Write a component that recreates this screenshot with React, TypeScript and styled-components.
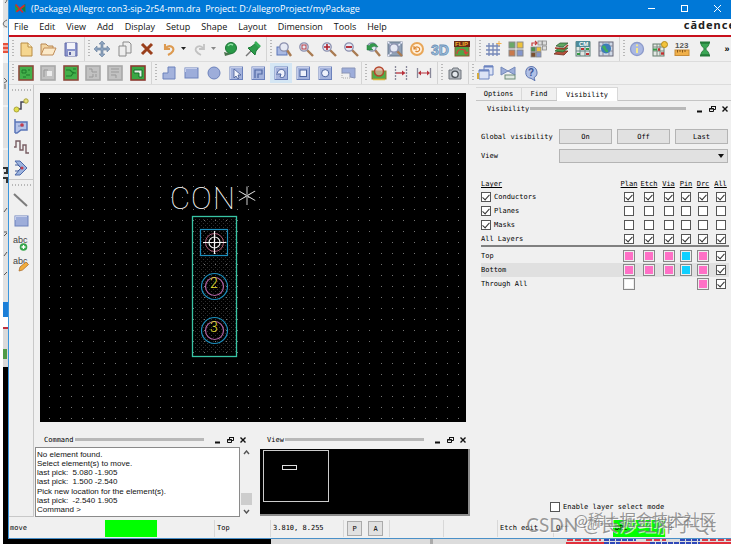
import React, { ReactNode } from 'react';
import styled, { createGlobalStyle } from 'styled-components';

const UI = '"Open Sans", "Noto Sans", sans-serif';
const MONO = '"DejaVu Sans Mono", "Liberation Mono", monospace';
const SANS = '"Liberation Sans", Arial, sans-serif';
const CJK = 'Lato, "Noto Sans CJK SC", sans-serif';

const Global = createGlobalStyle`
  * { box-sizing: border-box; }
  body { margin: 0; background: #fff; overflow: hidden; }
  button, select, input { font: inherit; color: inherit; margin: 0; padding: 0; border-radius: 0; }
`;

/* ---------- frame ---------- */
const Desktop = styled.div`
  position: relative;
  height: 100vh;
  display: grid;
  grid-template-columns: 8px minmax(0, 1fr);
  grid-template-rows: minmax(0, 1fr) 5px;
  overflow: hidden;
`;
const SideStrip = styled.svg`
  grid-row: 1 / 3;
  width: 8px;
  height: 100%;
`;
const BottomStrip = styled.svg`
  width: 100%;
  height: 5px;
`;
const Window = styled.div`
  display: flex;
  flex-direction: column;
  min-height: 0;
  background: #f0f0f0;
  border-left: 1px solid #3a96dd;
  border-bottom: 1px solid #4a90c8;
`;
const TitleBar = styled.header`
  height: 19px;
  flex: none;
  display: flex;
  align-items: center;
  gap: 4px;
  padding: 0 4px 2px 5px;
  background: #0078d7;
  color: #fff;
  font: 9px/14px ${UI};
  white-space: pre;
`;
const TitleText = styled.span`
  flex: 1;
`;
const TitleButton = styled.button`
  width: 33px;
  height: 14px;
  border: 0;
  background: none;
  display: grid;
  place-items: center;
`;
const TitleControls = styled.div`
  display: flex;
  margin-right: -7px;
`;
const MenuBar = styled.nav`
  height: 18px;
  flex: none;
  display: flex;
  align-items: center;
  gap: 11px;
  padding: 0 0 0 5px;
  background: #fff;
  border-bottom: 2px solid #c8101c;
  overflow: hidden;
`;
const MenuLink = styled.a`
  color: #111;
  text-decoration: none;
  font: 9px/14px ${UI};
`;
const Brand = styled.span`
  height: 16px;
  margin-left: auto;
  margin-right: -5px;
  color: #222;
  font: bold 11px/12px "Noto Sans", sans-serif;
  letter-spacing: 1px;
`;

/* ---------- toolbars ---------- */
const Toolbar = styled.div<{ $h: number }>`
  height: ${p => p.$h}px;
  flex: none;
  display: flex;
  border-bottom: 1px solid #dcdcdc;
  overflow: hidden;
`;
const Group = styled.div`
  flex: none;
  display: flex;
  align-items: center;
  padding-right: 2px;
  border-right: 1px solid #d4d4d4;
  &:last-of-type { border-right: 0; }
`;
const Handle = styled.div`
  width: 2px;
  height: 18px;
  margin: 0 1px 0 3px;
  background: repeating-linear-gradient(#b8b8b8 0 1px, transparent 1px 3px);
`;
const Items = styled.div<{ $w: number }>`
  width: ${p => p.$w}px;
  display: flex;
`;
const ToolButton = styled.button<{ $small?: boolean; $on?: boolean }>`
  flex: ${p => (p.$small ? '0 0 8px' : '1 1 0')};
  min-width: 0;
  height: 20px;
  border: 0;
  display: grid;
  place-items: center;
  background: ${p => (p.$on ? '#d4e6f4' : 'none')};
`;
const More = styled.button`
  margin: 0 0 0 auto;
  width: 8px;
  border: 0;
  background: none;
  font: bold 9px/12px ${SANS};
`;
const Glyph = styled.svg<{ $size: number }>`
  width: ${p => p.$size}px;
  height: ${p => p.$size}px;
  display: block;
  overflow: visible;
`;

/* ---------- body ---------- */
const Main = styled.div`
  flex: 1;
  min-height: 0;
  display: grid;
  grid-template-columns: 25px minmax(0, 1fr) 260px;
  padding-bottom: 2px;
`;
const ToolColumn = styled.aside`
  border-right: 1px solid #c8c8c8;
  border-bottom: 1px solid #c8c8c8;
`;
const ColumnGroup = styled.div`
  height: 95px;
  display: flex;
  flex-direction: column;
  align-items: center;
  padding-top: 4px;
  border-bottom: 1px solid #c8c8c8;
  &:last-child { border-bottom: 0; }
`;
const ColumnHandle = styled.div`
  width: 19px;
  height: 2px;
  margin-bottom: 3px;
  background: repeating-linear-gradient(90deg, #b8b8b8 0 1px, transparent 1px 3px);
`;
const ColumnButton = styled.button`
  flex: 1;
  width: 22px;
  border: 0;
  background: none;
  display: grid;
  place-items: center;
`;
const Center = styled.main`
  display: flex;
  flex-direction: column;
  min-height: 0;
  min-width: 0;
`;
const Board = styled.div`
  flex: 1;
  min-height: 0;
  margin: 8px 5px 0 6px;
  background: #000;
`;
const BoardDrawing = styled.svg`
  width: 100%;
  height: 100%;
  display: block;
`;
const Docks = styled.div`
  height: 95px;
  flex: none;
  display: flex;
  gap: 8px;
  padding: 10px 1px 0 1px;
`;
const Dock = styled.section<{ $grow: number }>`
  flex: ${p => p.$grow} 1 0;
  min-width: 0;
  display: flex;
  flex-direction: column;
`;
const DockHeader = styled.div<{ $pad: number; $end: number }>`
  height: 15px;
  flex: none;
  display: flex;
  align-items: center;
  padding: 0 ${p => p.$end}px 0 ${p => p.$pad}px;
  font: 7px/10px ${MONO};
  color: #000;
`;
const Rule = styled.div`
  flex: 1;
  height: 3px;
  margin: 0 6px 0 1px;
  background: #b8b8b8;
`;
const DockButton = styled.button`
  width: 13px;
  height: 12px;
  border: 0;
  background: none;
  display: grid;
  place-items: center;
`;
const CommandBody = styled.div`
  flex: 1;
  min-height: 0;
  display: flex;
`;
const Log = styled.div`
  flex: 1;
  display: flex;
  flex-direction: column;
  justify-content: space-between;
  padding: 2px 1px;
  background: #fff;
  border: 1px solid #8a8a8a;
  color: #111;
  font: 8px/9px ${SANS};
  white-space: pre;
`;
const Scroll = styled.div`
  width: 12px;
  display: flex;
  flex-direction: column;
  align-items: center;
  padding: 3px 0;
`;
const Thumb = styled.div`
  width: 11px;
  height: 12px;
  margin: auto 0 4px;
  background: #cdcdcd;
`;
const Overview = styled.div`
  flex: 1;
  min-height: 0;
  margin: 2px 0 1px 0;
  background: #000;
  border: solid #8c8c8c;
  border-width: 0 2px 2px 0;
`;

/* ---------- right panel ---------- */
const Side = styled.aside`
  display: flex;
  flex-direction: column;
  min-width: 0;
  padding: 2px 0 0 5px;
  font: 7px/10px ${MONO};
  color: #000;
`;
const Tabs = styled.div`
  display: flex;
  height: 14px;
  border-bottom: 1px solid #c4c4c4;
`;
const Tab = styled.button<{ $w: number; $on?: boolean }>`
  width: ${p => p.$w}px;
  height: ${p => (p.$on ? 14 : 13)}px;
  border: solid #d8d8d8;
  border-width: 1px 1px 0 0;
  background: ${p => (p.$on ? '#fff' : '#f0f0f0')};
`;
const Form = styled.div`
  display: grid;
  grid-template-columns: 73px repeat(3, 53px);
  column-gap: 5px;
  row-gap: 5px;
  align-items: center;
  padding: 13px 0 0 5px;
  white-space: nowrap;
`;
const PushButton = styled.button`
  height: 15px;
  background: #e1e1e1;
  border: 1px solid #b4b4b4;
`;
const ViewSelect = styled.select`
  height: 14px;
  appearance: none;
  border: 1px solid #b4b4b4;
  background: #e1e1e1;
`;
const SelectWrap = styled.div`
  grid-column: 2 / 5;
  display: grid;
  align-items: center;
  & > * { grid-area: 1 / 1; }
  & > svg { justify-self: end; margin-right: 4px; pointer-events: none; }
`;
const Layers = styled.table`
  width: 248px;
  margin: 15px 0 0 5px;
  border-collapse: collapse;
  table-layout: fixed;
  th, td { padding: 0; text-align: center; font-weight: normal; height: 14px; }
  th:first-child, td:first-child { text-align: left; }
  thead th { text-decoration: underline; height: 12px; }
`;
const LayerRow = styled.tr<{ $shade?: boolean; $line?: boolean }>`
  background: ${p => (p.$shade ? '#e0e0e0' : 'none')};
  ${p => p.$line && 'border-bottom: 2px solid #808080;'}
`;
const SpacerRow = styled.tr`
  && td { height: 3px; }
`;
const Check = styled.input`
  appearance: none;
  width: 10px;
  height: 10px;
  flex: none;
  border: 1px solid #555;
  background: #fff;
  display: inline-grid;
  place-items: center;
  vertical-align: middle;
  &:checked::after {
    content: '';
    width: 3px;
    height: 6px;
    margin-bottom: 2px;
    border: solid #333;
    border-width: 0 1px 1px 0;
    transform: rotate(42deg);
  }
`;
const CheckLabel = styled.label`
  display: flex;
  align-items: center;
  gap: 3px;
`;
const Swatch = styled.button<{ $c: string }>`
  width: 12px;
  height: 12px;
  display: block;
  margin: 0 auto;
  border: 1px solid #888;
  background: ${p => p.$c};
  box-shadow: inset 0 0 0 1px #eee;
`;
const SelectMode = styled.div`
  margin: auto 0 5px 74px;
`;

/* ---------- status bar ---------- */
const Status = styled.footer`
  height: 19px;
  flex: none;
  display: flex;
  align-items: center;
  font: 7px/17px ${MONO};
  color: #000;
  overflow: hidden;
`;
const Cell = styled.div<{ $w?: number; $line?: boolean }>`
  flex: ${p => (p.$w ? `0 0 ${p.$w}px` : '1 1 0')};
  height: 17px;
  padding-left: ${p => (p.$line ? 2 : 1)}px;
  border-left: ${p => (p.$line ? '1px solid #d8d8d8' : '0')};
  white-space: pre;
`;
const Lamp = styled.div`
  flex: 0 0 52px;
  height: 17px;
  padding-left: 2px;
  background: #0f0;
`;
const ModeButton = styled.button`
  width: 15px;
  height: 15px;
  margin-right: 6px;
  line-height: 12px;
  border: 1px solid #aaa;
  background: #e1e1e1;
`;
const Watermark = styled.div<{ $x: number; $y: number; $size: number }>`
  position: absolute;
  right: ${p => p.$x}px;
  bottom: ${p => p.$y}px;
  color: rgba(120, 120, 120, 0.75);
  font: ${p => p.$size}px/20px ${CJK};
  text-shadow: 1px 1px 0 rgba(255, 255, 255, 0.7);
  white-space: nowrap;
  pointer-events: none;
`;

/* ---------- icon artwork ---------- */
const B = '#5b76b8';
const L = '#a9b9e2';
const lens = (x: number, y: number, sign: ReactNode) => (
  <g>
    <path d={`M${x + 3} ${y + 3}L15 15`} stroke="#a97b52" strokeWidth="2.4" />
    <circle cx={x} cy={y} r="4.2" fill="#e6e9f4" stroke="#8a8fae" strokeWidth="1.3" />
    {sign}
  </g>
);
const board = (frame: string, fill: string, art: ReactNode) => (
  <g>
    <rect x="1" y="1" width="14" height="14" fill={fill} stroke={frame} strokeWidth="1.6" />
    {art}
  </g>
);
const tile = (art: ReactNode) => (
  <g>
    <rect x="2" y="2" width="12.5" height="12.5" fill="#a3b2dc" stroke="#6c82bc" />
    <path d="M2.5 14V2.5H14" stroke="#c4cdea" fill="none" />
    {art}
  </g>
);
const word = (s: string, x: number, y: number, size: number, fill: string) => (
  <text x={x} y={y} fontSize={size} fontWeight="bold" fontFamily="Liberation Sans" fill={fill}>{s}</text>
);
const icons: Record<string, ReactNode> = {
  logo: <g><path d="M1 3l6 5-5 5z" fill="#1aa04a" /><path d="M14 2L8 7l6 6z" fill="#14813c" /><path d="M2 3l9 10M3 12L13 4" stroke="#d82a2a" strokeWidth="2" /></g>,
  file: <g><path d="M3 2h7l4 4v9H3z" fill="#f5d68f" stroke="#b88c45" /><path d="M10 2v4h4" fill="#fff3cf" stroke="#b88c45" /></g>,
  open: <g><path d="M1 14V3h5l2 2h5v3" fill="#f3d6a4" stroke="#b88650" /><path d="M1 14l3-7h12l-3 7z" fill="#fbe9c8" stroke="#c08c58" /></g>,
  save: <g><path d="M2 2h12v13H2z" fill="#8a94cc" stroke="#646ca8" /><rect x="4" y="2" width="8" height="6" fill="#f2f3fa" /><rect x="5" y="10" width="7" height="5" fill="#dfe2ee" /><rect x="6" y="11" width="2" height="3" fill="#5a62a0" /></g>,
  move: <path d="M8 0l3 3H9v4h4V5l3 3-3 3V9H9v4h2l-3 3-3-3h2V9H3v2L0 8l3-3v2h4V3H5z" fill="#8ba1bd" stroke="#647d9c" strokeWidth=".6" />,
  copy: <g fill="#eee" stroke="#8a8a8a"><path d="M6 1h6l2 2v9H6z" /><path d="M2 5h7v10H2z" /></g>,
  del: <path d="M3 3l10 10M13 3L3 13" stroke="#9a3f1c" strokeWidth="3" />,
  undo: <path d="M4 3v5h5M4.500 7.500C8 3 14 6 12 10c-1 2-3 3-5 4" fill="none" stroke="#dd9a50" strokeWidth="2.1" />,
  redo: <path d="M12 3v5H7M11.500 7.500C8 3 2 6 4 10c1 2 3 3 5 4" fill="none" stroke="#c2c2c2" strokeWidth="1.800" />,
  drop: <path d="M0 6h5l-2.500 3z" fill="#222" />,
  drop2: <path d="M0 6h5l-2.500 3z" fill="#888" />,
  ball: <g><path d="M2 11l8 2-7 2z" fill="#4c7350" /><circle cx="9" cy="7" r="5.500" fill="#2a9a48" stroke="#1c7436" /><path d="M6 5c1-2 3-2 5-1" stroke="#8fe0a4" fill="none" strokeWidth="1.500" /></g>,
  pin: <g><path d="M1 15l6-6" stroke="#777" strokeWidth="1.500" /><path d="M3 7l3-1 5-4 4 3-4 5-1 4z" fill="#2c9a4a" stroke="#1c7a36" /><path d="M10 1l5 5" stroke="#37b058" strokeWidth="2.500" /></g>,
  zwin: <g><rect x="1" y="6" width="10" height="8" fill={L} stroke={B} />{lens(8, 6, null)}</g>,
  zfit: lens(6, 6, <rect x="4" y="4" width="4" height="4" fill="none" stroke="#b43c44" />),
  zin: lens(6, 6, <path d="M3 6h6M6 3v6" stroke="#b0202c" strokeWidth="1.600" />),
  zout: lens(6, 6, <path d="M3 6h6" stroke="#b0202c" strokeWidth="1.800" />),
  zprev: <g>{lens(7, 6, null)}<path d="M2 9V4l2 1c2-4 7-3 9 1-3-1-5-1-7 1l2 2z" fill="#339a4c" stroke="#207838" strokeWidth=".5" /></g>,
  zall: <g><rect x="1" y="1" width="14" height="14" fill="#8fa0b5" stroke="#66768c" /><path d="M1 1l4 4M15 1l-4 4M1 15l4-4" stroke="#eef" strokeWidth="1.5" strokeDasharray="2 1" />{lens(7, 7, null)}</g>,
  refresh: <g><circle cx="8" cy="8" r="6" fill="#fff0dc" stroke="#e8a658" strokeWidth="2" /><path d="M5 5v3h3M5.500 7.500c2-3 6-1 5 1.500-1 2-3 2-4 1" fill="none" stroke="#d98530" strokeWidth="1.200" /></g>,
  three: <g stroke="#6b92b8" strokeWidth=".8">{word('3D', -1, 14, 14, '#a4c2de')}</g>,
  flip: <g><rect x="1" y="5" width="14" height="10" fill="#4fa545" stroke="#8b5a30" /><rect x="0" y="0" width="16" height="6" fill="#6a2a18" />{word('FLIP', 1, 5, 6, '#f4b22c')}<path d="M3 13c0-6 9-6 9-1M10 11l2 2 2-2" stroke="#d8403c" fill="none" strokeWidth="1.400" /></g>,
  grid: <g><path d="M1 5h14M1 9h14M1 13h14M4 2v13M8 2v13M12 2v13" stroke="#7688b8" strokeWidth="1.300" /><path d="M14 0v5M11.500 2.500h5" stroke="#f2b04c" /></g>,
  colors: <g stroke="#8a8a8a"><rect x="1" y="1" width="6" height="6" fill="#6ba868" /><rect x="9" y="1" width="6" height="6" fill="#edc23c" /><rect x="1" y="9" width="6" height="6" fill="#c8794c" /><rect x="9" y="9" width="6" height="6" fill="#8496cc" /></g>,
  colors2: <g stroke="#888" strokeWidth=".8"><rect x="8" y="0" width="4" height="4" fill="#ddd" /><rect x="12.500" y="0" width="4" height="4" fill="#ddd" /><rect x="12.500" y="5" width="4" height="4" fill="#ddd" /><rect x="1" y="6" width="4.500" height="4.500" fill="#4b8d50" /><rect x="6.500" y="6" width="4.500" height="4.500" fill="#edc23c" /><rect x="1" y="11.500" width="4.500" height="4.500" fill="#7a5030" /><rect x="6.500" y="11.500" width="4.500" height="4.500" fill="#8496cc" /><path d="M2 5V2h4M5 0l2 2-2 2" stroke="#c43a3a" fill="none" strokeWidth="1.200" /></g>,
  stack: <g strokeWidth=".8"><path d="M1 13l4-3h10l-4 4z" fill="#b4503c" stroke="#743020" /><path d="M2 10l4-3h9l-5 4z" fill="#4d9a50" stroke="#2d6a34" /><path d="M3 5l4-3h8l-5 4z" fill="#5fa862" stroke="#345c36" /><path d="M2 7l9 1 4-4" stroke="#a03828" fill="none" strokeWidth="1.500" /></g>,
  cm: <g><rect x="1" y="1" width="14" height="14" fill="#dfe5e2" stroke="#5d7c76" /><rect x="1" y="0" width="14" height="6" fill="#4e8b98" />{word('CM', 4, 5, 6, '#fff')}<path d="M5 6v9M10 6v9M1 10h14" stroke="#688" /><path d="M6 8h3M11 13h3" stroke="#c03030" strokeWidth="2" /><path d="M11 8h3M2 13h3" stroke="#339a44" strokeWidth="2" /></g>,
  globe: <g><rect x="1" y="1" width="14" height="14" fill="#cfd8e6" stroke="#667" /><path d="M1 5h14M1 10h14M5 1v14M11 1v14" stroke="#889" /><circle cx="8" cy="7.500" r="5" fill="#3c7cb8" /><path d="M4 6c2-3 4-1 4 1s3 1 2 4c-3 1-3-2-6-5z" fill="#3fae5a" /></g>,
  info: <g><circle cx="8" cy="8" r="6.500" fill="#aab8e2" stroke="#8b99c9" strokeWidth="1.300" /><path d="M8 3.500v1.800M8 7v5" stroke="#f4e88a" strokeWidth="2" /></g>,
  sheet: <g><rect x="1" y="3" width="11" height="12" fill="#e4e8e4" stroke="#667c6e" /><path d="M1 6h11M1 10h11M5 3v12M8 3v12" stroke="#7a8c80" /><path d="M6 8.500h2M9 12.500h3" stroke="#c03030" strokeWidth="2.500" /><path d="M1 8.500h4" stroke="#339a44" strokeWidth="2" /><circle cx="12.500" cy="3.500" r="3" fill="#f2c33c" stroke="#b58a1c" /></g>,
  ruler: <g>{word('123', 1, 7, 8, '#555')}<rect x="1" y="9" width="14" height="5.500" fill="#f0b04a" stroke="#c88c38" /><path d="M3.500 9v2.500M6 9v2M8.500 9v2.500M11 9v2" stroke="#8a5818" /></g>,
  hourglass: <g><path d="M4 2h8c0 4-3 4-3 6s3 2 3 6H4c0-4 3-4 3-6S4 6 4 2z" fill="#3aa654" stroke="#227a38" /><path d="M3 1.500h10M3 14.500h10" stroke="#227a38" strokeWidth="2" /></g>,
  b1: board('#8c4a3c', '#44b04a', <path d="M4 5h4v3H4zM8 10h4M10 5h2M5 12h3" stroke="#1d7a2a" fill="none" />),
  b2: board('#a8a8a8', '#c2c2c2', <g><rect x="7" y="6" width="5" height="5" fill="#ececec" /><path d="M4 12V5h4" stroke="#999" fill="none" /></g>),
  b3: board('#8c4a3c', '#44b04a', <path d="M3 5h4l3 3h3M3 11h5l3-4M10 4h3" stroke="#1d7a2a" fill="none" strokeWidth="1.200" />),
  b4: board('#a8a8a8', '#c2c2c2', <path d="M4 4h3v3h5M4 12h4V9M11 12V9" stroke="#999" fill="none" />),
  b5: board('#a8a8a8', '#c2c2c2', <path d="M4 4h8M4 7h8M4 10h5v3" stroke="#999" fill="none" />),
  b6: board('#8c3a30', '#3aa644', <path d="M4 5h8v7H9V8H4z" fill="#e8f0e6" stroke="#14702a" />),
  shape: <path d="M7 2h7v12H2V8h5z" fill="#a3b2dc" stroke="#6c82bc" />,
  rect: <g><rect x="2" y="3" width="13" height="10" fill="#9dadda" stroke="#6c82bc" /><path d="M2.500 7V3.500H14" stroke="#c4cdea" fill="none" /></g>,
  circle: <circle cx="8" cy="8" r="6" fill="#9dadda" stroke="#6c82bc" />,
  pick: tile(<path d="M6 4v9l2-2 2 3 1-1-1-3h3z" fill="#f4f6fc" stroke="#445a94" strokeWidth=".8" />),
  void1: tile(<path d="M5 13V5h7v4H8v4" fill="none" stroke="#5068a4" strokeWidth="1.200" />),
  void2: tile(<path d="M4 10c0-7 8-7 8-2s-3 5-5 4l1-3H5" fill="#eef1fb" stroke="#4c649f" />),
  void3: tile(<rect x="5" y="5" width="6.500" height="6.500" fill="#eef1fb" stroke="#4c649f" />),
  void4: tile(<circle cx="8.200" cy="8.200" r="3.600" fill="#eef1fb" stroke="#4c649f" />),
  island: <g><path d="M2 3h13v10l-5-1V8H2z" fill="#9dadda" stroke="#8a95b8" /><path d="M2 8v5h8" stroke="#aaa" strokeDasharray="1 1" fill="none" /></g>,
  drc: <g><rect x="1" y="6" width="14" height="8" fill="#4fae48" stroke="#9a7a30" /><circle cx="8" cy="6.500" r="4.500" fill="#dfb09c" fillOpacity=".7" stroke="#b4452c" strokeWidth="1.500" /><path d="M2 14.500h12" stroke="#d4b63c" strokeWidth="1.500" /></g>,
  dim1: <g stroke="#889"><path d="M2.500 1v14M13.500 1v14" strokeDasharray="2 1" strokeWidth="1.300" /><path d="M3 8h7" stroke="#b8323c" strokeWidth="1.300" /><path d="M9 5.500l3.500 2.500-3.500 2.500z" fill="#b8323c" stroke="none" /></g>,
  dim2: <g><path d="M1.500 3v10M14.500 3v10" stroke="#889" strokeWidth="1.300" /><path d="M3 8h10" stroke="#b8323c" /><path d="M5 5.500L2 8l3 2.500zM11 5.500L14 8l-3 2.500z" fill="#b8323c" /></g>,
  camera: <g><path d="M2 5h3l1-2h5l1 2h2v9H2z" fill="#b5bac0" stroke="#70767e" /><circle cx="8" cy="9.300" r="3.200" fill="#e4e8ec" stroke="#4c5258" strokeWidth="1.300" /></g>,
  windows: <g fill="#dce3f5" stroke="#6c84c0"><path d="M6 1h9v9H6z" /><path d="M1 5h10v9H1z" /><path d="M1 5.500h10M6 1.500h9" strokeWidth="2" /><path d="M0 8v6" stroke="#d4aa3c" strokeWidth="2" /></g>,
  cross: <g><path d="M1 2l14 8V2L1 10z" fill="#9cadd8" stroke="#7488b8" /><rect x="5" y="10" width="10" height="4" fill="#dfe8e0" stroke="#6c8a78" /></g>,
  help: <g><path d="M8 1.500a6 6 0 0 1 3 11.200l1 3-4-2.300A6 6 0 0 1 8 1.500z" fill="#b0c0e6" stroke="#5f76b0" />{word('?', 5, 11, 10, '#3c5494')}</g>,
  route: <g><path d="M4 12h4V5h4" stroke="#445" fill="none" strokeWidth="1.500" /><circle cx="3.500" cy="12.500" r="2.500" fill="#e2df4c" stroke="#aaa43a" /><circle cx="13" cy="4" r="2.200" fill="#e8e080" stroke="#aaa43a" /></g>,
  slide: <g><path d="M2 1v14M2 4h12v8H8l-4 3H2" fill="#b6c4e8" stroke="#5b76b8" strokeWidth="1.500" /><path d="M5 8h6" stroke="#7488ba" /><circle cx="9" cy="7" r="1.800" fill="#c33c4c" /></g>,
  delay: <path d="M1 8h2V2h4v9h3V6h3v8h3" fill="none" stroke="#785d63" strokeWidth="1.400" />,
  fan: <g><path d="M2 1h5l7 7-7 7H2l6-7z" fill="#9cb3de" stroke="#4c68a8" /><path d="M2 5h3l3 3-3 3H2" fill="none" stroke="#3e5a9c" /><circle cx="9" cy="8" r="1.500" fill="#c33c4c" /></g>,
  line: <path d="M1 2l13 12" stroke="#7c7c7c" strokeWidth="2" />,
  textAdd: <g><text x="0" y="8" fontSize="9" fontFamily="Liberation Sans" fill="#444">abc</text><circle cx="10.500" cy="12" r="3.800" fill="#35a54a" /><path d="M8.500 12h4M10.500 10v4" stroke="#fff" strokeWidth="1.300" /></g>,
  textEdit: <g><text x="0" y="8" fontSize="9" fontFamily="Liberation Sans" fill="#444">abc</text><path d="M6 15l1-4 6-5 2.500 2.500-6 5.500z" fill="#f2ae3c" stroke="#b0702c" strokeWidth=".8" /></g>,
};
const Icon = ({ name, size = 16 }: { name: string; size?: number }) => (
  <Glyph $size={size} viewBox="0 0 16 16" fill="none" aria-hidden="true">{icons[name]}</Glyph>
);

const row1 = [
  { w: 67, items: ['file', 'open', 'save'] },
  { w: 173, items: ['move', 'copy', 'del', 'undo', 'drop', 'redo', 'drop2', 'ball', 'pin'] },
  { w: 200, items: ['zwin', 'zfit', 'zin', 'zout', 'zprev', 'zall', 'refresh', 'three', 'flip'] },
  { w: 135, items: ['grid', 'colors', 'colors2', 'stack', 'cm', 'globe'] },
  { w: 90, items: ['info', 'sheet', 'ruler', 'hourglass'] },
];
const row2 = [
  { w: 134, items: ['b1', 'b2', 'b3', 'b4', 'b5', 'b6'] },
  { w: 201, items: ['shape', 'rect', 'circle', 'pick', 'void1', 'void2', 'void3', 'void4', 'island'] },
  { w: 67, items: ['drc', 'dim1', 'dim2'] },
  { w: 22, items: ['camera'] },
  { w: 67, items: ['windows', 'cross', 'help'] },
];
const ToolGroups = ({ groups }: { groups: { w: number; items: string[] }[] }) => (
  <>
    {groups.map(g => (
      <Group key={g.items[0]}>
        <Handle />
        <Items $w={g.w}>
          {g.items.map(n => (
            <ToolButton key={n} aria-label={n} $small={n.startsWith('drop')} $on={n === 'void2'}>
              <Icon name={n} />
            </ToolButton>
          ))}
        </Items>
      </Group>
    ))}
  </>
);

const WindowButtons = () => (
  <>
    <DockButton aria-label="Minimize"><svg width="8" height="8"><path d="M2 6.500h5" stroke="#111" strokeWidth="2" /></svg></DockButton>
    <DockButton aria-label="Float"><svg width="8" height="8" fill="none" stroke="#111"><path d="M3.500 3V1.500h4v3H6" /><path d="M1.500 3.500h4v3h-4zM3 1.500h5M1 4h5" /></svg></DockButton>
    <DockButton aria-label="Close"><svg width="8" height="8"><path d="M1.500 1.500l5 5M6.500 1.500l-5 5" stroke="#111" strokeWidth="1.400" /></svg></DockButton>
  </>
);

/* ---------- board drawing ---------- */
const PITCH = 11.05;
const dotPath = (cols: number, rows: number, x0: number, y0: number, step: number) => {
  let d = '';
  for (let r = 0; r < rows; r++)
    for (let c = 0; c < cols; c++) d += `M${Math.round(x0 + c * step)} ${Math.round(y0 + r * step)}h1v1h-1z`;
  return d;
};
const BoardView = () => (
  <BoardDrawing role="img" aria-label="Package drawing">
    <path d={dotPath(120, 80, 9, 5, PITCH)} fill="#767676" />
    <path d={dotPath(11, 34, 155, 126, 4)} fill="#343434" />
    <path d={dotPath(10, 33, 157, 128, 4)} fill="#2c2c2c" />
    <rect x="152.500" y="123.500" width="44" height="140" fill="none" stroke="#38c4a4" strokeWidth="1.300" />
    <g fill="none">
      <rect x="160.500" y="136.500" width="27" height="26" stroke="#1c8fbe" strokeWidth="1.200" />
      <circle cx="174.500" cy="149.500" r="9" stroke="#b0607c" />
      <circle cx="174.500" cy="149.500" r="5.500" stroke="#eee" strokeWidth="1.200" />
      <path d="M163 149.500h23M174.500 138v23" stroke="#f4f4f4" strokeWidth="1.200" />
      {[193.5, 237.5].map(y => (
        <g key={y}>
          <circle cx="174.500" cy={y} r="13" stroke="#1c8fbe" strokeWidth="1.200" />
          <circle cx="174.500" cy={y} r="9" stroke="#b264a6" strokeWidth="1.200" />
        </g>
      ))}
    </g>
    <g fontFamily="Roboto, Lato, sans-serif" fontWeight="100" fill="#fff">
      <text y="116" fontSize="31" x="130 151 173">CON</text>
      <text y="143" fontSize="66" x="193" fontFamily="Lato, sans-serif">*</text>
    </g>
    <g fontFamily="Roboto, Lato, sans-serif" fontWeight="300" fontSize="14" fill="#e8e030">
      <text x="170" y="195">2</text>
      <text x="170" y="239">3</text>
    </g>
  </BoardDrawing>
);

/* ---------- visibility panel data ---------- */
const columns = ['Plan', 'Etch', 'Via', 'Pin', 'Drc', 'All'];
const classes = [
  { name: 'Conductors', own: true, on: true },
  { name: 'Planes', own: true, on: false },
  { name: 'Masks', own: true, on: false },
  { name: 'All Layers', own: false, on: true },
];
const P = '#ff70c6';
const C = '#10d0ff';
const layers = [
  { name: 'Top', colors: [P, P, P, C, P] },
  { name: 'Bottom', colors: [P, P, P, C, P] },
  { name: 'Through All', colors: ['#fff', '', '', '', P] },
];
const log = [
  'No element found.',
  'Select element(s) to move.',
  'last pick:  5.080 -1.905',
  'last pick:  1.500 -2.540',
  'Pick new location for the element(s).',
  'last pick:  -2.540 1.905',
  'Command >',
];

export default function App() {
  return (
    <Desktop>
      <Global />
      <SideStrip aria-hidden="true">
        <path d="M3 0h5v302H3z" fill="#e2e2e2" />
        <path d="M3 28h5v35H3z" fill="#f4f4f4" />
        <path d="M7 0a6 6 0 0 1-2 3M7 20c-5 2-5 6 0 7M4 78l3 3-3 2M5 84v5" stroke="#666" fill="none" />
        <path d="M3 43h5v10H3z" fill="#e8523c" />
        <path d="M3 46h5M3 50h5" stroke="#fff" />
        <path d="M3 168h4v5H4M3 178h4v5" stroke="#333" strokeWidth="2" fill="none" />
        <path d="M3 106h5M3 149h5" stroke="#fff" />
        <path d="M4 212l3-4M4 232h3M4 236l3-3M4 256l3-4M4 275l3-3" stroke="#555" fill="none" />
        <path d="M3 302h5v15H3z" fill="#1b7fd8" />
        <path d="M3 317h5v9H3z" fill="#fff" />
        <path d="M3 327h5v2H3z" fill="#c03040" />
        <path d="M3 329h5v38H3z" fill="#dadada" />
        <path d="M3 349h4v10H3z" fill="#4f9a48" />
        <path d="M3 367h5v177H3z" fill="#000" />
      </SideStrip>
      <Window>
        <TitleBar>
          <Icon name="logo" size={13} />
          <TitleText>(Package) Allegro: con3-sip-2r54-mm.dra  Project: D:/allegroProject/myPackage</TitleText>
          <TitleControls>
            <TitleButton aria-label="Minimize"><svg width="9" height="9"><path d="M1 4.500h7" stroke="#fff" /></svg></TitleButton>
            <TitleButton aria-label="Maximize"><svg width="9" height="9"><rect x="1.500" y="1.500" width="6" height="6" fill="none" stroke="#fff" /></svg></TitleButton>
            <TitleButton aria-label="Close"><svg width="9" height="9"><path d="M1 1l7 7M8 1L1 8" stroke="#fff" /></svg></TitleButton>
          </TitleControls>
        </TitleBar>
        <MenuBar>
          {['File', 'Edit', 'View', 'Add', 'Display', 'Setup', 'Shape', 'Layout', 'Dimension', 'Tools', 'Help'].map(m => (
            <MenuLink key={m} href="#">{m}</MenuLink>
          ))}
          <Brand>cādence</Brand>
        </MenuBar>
        <Toolbar $h={25}>
          <ToolGroups groups={row1} />
          <More aria-label="More tools">»</More>
        </Toolbar>
        <Toolbar $h={23}><ToolGroups groups={row2} /></Toolbar>

        <Main>
          <ToolColumn>
            {[['route', 'slide', 'delay', 'fan'], ['line', 'rect', 'textAdd', 'textEdit']].map(g => (
              <ColumnGroup key={g[0]}>
                <ColumnHandle />
                {g.map(n => <ColumnButton key={n} aria-label={n}><Icon name={n} /></ColumnButton>)}
              </ColumnGroup>
            ))}
          </ToolColumn>

          <Center>
            <Board><BoardView /></Board>
            <Docks>
              <Dock $grow={217}>
                <DockHeader $pad={9} $end={3}>Command<Rule /><WindowButtons /></DockHeader>
                <CommandBody>
                  <Log>{log.map(l => <div key={l}>{l}</div>)}</Log>
                  <Scroll>
                    <svg width="7" height="5" fill="none"><path d="M1 4l2.500-3L6 4" stroke="#555" strokeWidth="1.400" /></svg>
                    <Thumb />
                    <svg width="7" height="5" fill="none"><path d="M1 1l2.500 3L6 1" stroke="#555" strokeWidth="1.400" /></svg>
                  </Scroll>
                </CommandBody>
              </Dock>
              <Dock $grow={210}>
                <DockHeader $pad={7} $end={1}>View<Rule /><WindowButtons /></DockHeader>
                <Overview>
                  <BoardDrawing role="img" aria-label="World view">
                    <rect x="3.500" y="1.500" width="65" height="51" fill="none" stroke="#ccc" />
                    <rect x="22.500" y="16.500" width="14" height="4" fill="none" stroke="#ddd" />
                  </BoardDrawing>
                </Overview>
              </Dock>
            </Docks>
          </Center>

          <Side>
            <Tabs role="tablist">
              <Tab role="tab" $w={46}>Options</Tab>
              <Tab role="tab" $w={35}>Find</Tab>
              <Tab role="tab" $w={61} $on>Visibility</Tab>
            </Tabs>
            <DockHeader $pad={11} $end={0}>Visibility<Rule /><WindowButtons /></DockHeader>
            <Form>
              <span>Global visibility</span>
              <PushButton>On</PushButton>
              <PushButton>Off</PushButton>
              <PushButton>Last</PushButton>
              <label htmlFor="view">View</label>
              <SelectWrap>
                <ViewSelect id="view"><option></option></ViewSelect>
                <svg width="6" height="4"><path d="M0 0h6L3 4z" fill="#111" /></svg>
              </SelectWrap>
            </Form>
            <Layers>
              <colgroup>
                <col />
                {[20, 20, 19, 16, 18, 17].map((w, i) => <col key={i} width={w} />)}
              </colgroup>
              <thead>
                <tr><th>Layer</th>{columns.map(c => <th key={c}>{c}</th>)}</tr>
              </thead>
              <tbody>
                {classes.map((k, i) => (
                  <LayerRow key={k.name} $line={i === 3}>
                    <td>{k.own ? <CheckLabel><Check type="checkbox" defaultChecked />{k.name}</CheckLabel> : k.name}</td>
                    {columns.map(c => <td key={c}><Check type="checkbox" aria-label={`${k.name} ${c}`} defaultChecked={k.on} /></td>)}
                  </LayerRow>
                ))}
                <SpacerRow><td colSpan={7} /></SpacerRow>
                {layers.map(l => (
                  <LayerRow key={l.name} $shade={l.name === 'Bottom'}>
                    <td>{l.name}</td>
                    {l.colors.map((c, i) => <td key={i}>{c && <Swatch $c={c} aria-label={`${l.name} ${columns[i]} color`} />}</td>)}
                    <td><Check type="checkbox" aria-label={`${l.name} All`} defaultChecked /></td>
                  </LayerRow>
                ))}
              </tbody>
            </Layers>
            <SelectMode>
              <CheckLabel><Check type="checkbox" />Enable layer select mode</CheckLabel>
            </SelectMode>
          </Side>
        </Main>

        <Status>
          <Cell $w={96}>move</Cell>
          <Lamp />
          <Cell $w={57} />
          <Cell $w={56} $line>Top</Cell>
          <Cell $w={73} $line>3.810, 8.255</Cell>
          <Cell $w={4} $line />
          <ModeButton>P</ModeButton>
          <ModeButton>A</ModeButton>
          <Cell $w={54} $line />
          <Cell $line />
          <Cell $w={56} $line>Etch edit</Cell>
          <Cell $w={60} $line>Off</Cell>
          <Lamp>DRC</Lamp>
          <Cell $w={66} $line>0</Cell>
        </Status>
      </Window>
      <BottomStrip aria-hidden="true">
        <path d="M0 0h263v5H0z" fill="#000" />
        <path d="M263 0h460v5H263z" fill="#dcdcdc" />
        <path d="M422 0h3v5h-3z" fill="#aaa" />
        <path d="M559 1h34M638 1h20M694 1h29" stroke="#d83a48" strokeWidth="2" strokeDasharray="6 2" />
        <path d="M558 4h38M612 4h30M692 4h31" stroke="#e0303c" strokeWidth="2" />
        <path d="M596 1h32M672 1h20M596 4h16M642 4h50" stroke="#3048b8" strokeWidth="2" strokeDasharray="5 1" />
      </BottomStrip>
      <Watermark $x={15} $y={9} $size={19}>CSDN @长沙红胖子Qt</Watermark>
      <Watermark $x={15} $y={14} $size={16}>@稀土掘金技术社区</Watermark>
    </Desktop>
  );
}
